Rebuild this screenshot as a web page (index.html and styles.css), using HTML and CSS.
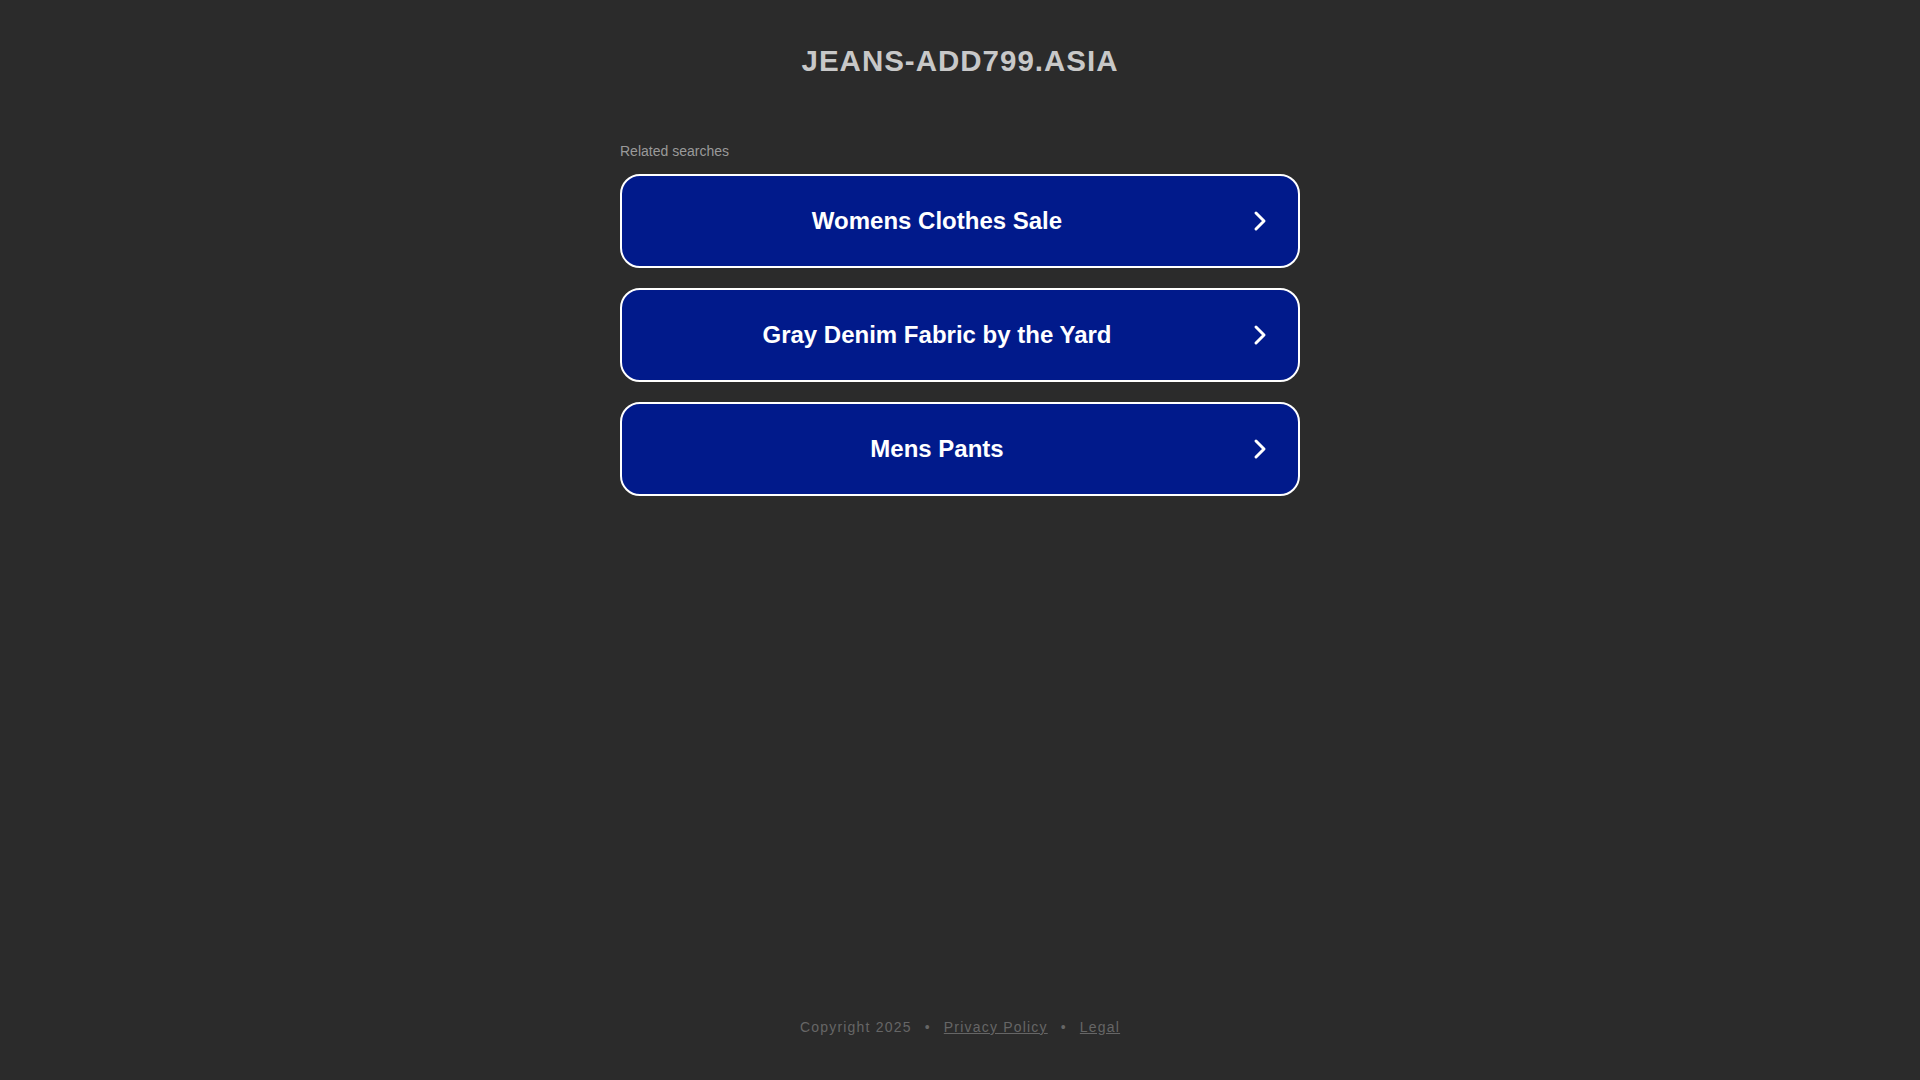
FILE: index.html
```html
<!DOCTYPE html>
<html lang="en">
<head>
    <meta charset="UTF-8">
    <meta name="viewport" content="width=device-width, initial-scale=1.0">
    <link rel="stylesheet" href="styles.css">
    <title>jeans-add799.asia</title>
</head>
<body>
    <div class="page">
        <header class="header">
            <h1 class="domain">JEANS-ADD799.ASIA</h1>
        </header>
        <main class="content">
            <p class="related">Related searches</p>
            <a href="#" class="search-btn">
                <span class="search-text">Womens Clothes Sale</span>
                <svg class="arrow" viewBox="0 0 16 24" width="16" height="24"><path d="M4 4 L12 12 L4 20" fill="none" stroke="#fff" stroke-width="3" stroke-linecap="round" stroke-linejoin="round"/></svg>
            </a>
            <a href="#" class="search-btn">
                <span class="search-text">Gray Denim Fabric by the Yard</span>
                <svg class="arrow" viewBox="0 0 16 24" width="16" height="24"><path d="M4 4 L12 12 L4 20" fill="none" stroke="#fff" stroke-width="3" stroke-linecap="round" stroke-linejoin="round"/></svg>
            </a>
            <a href="#" class="search-btn">
                <span class="search-text">Mens Pants</span>
                <svg class="arrow" viewBox="0 0 16 24" width="16" height="24"><path d="M4 4 L12 12 L4 20" fill="none" stroke="#fff" stroke-width="3" stroke-linecap="round" stroke-linejoin="round"/></svg>
            </a>
        </main>
        <footer class="footer">
            <span>Copyright 2025</span>
            <span class="dot">&bull;</span>
            <a href="#">Privacy Policy</a>
            <span class="dot">&bull;</span>
            <a href="#">Legal</a>
        </footer>
    </div>
</body>
</html>
```

FILE: styles.css
```css
body {
    font-family: "Liberation Sans", Arial, sans-serif;
    background-color: #2b2b2b;
    color: #fff;
    margin: 0;
    padding: 0;
}

.page {
    display: flex;
    flex-direction: column;
    min-height: 100vh;
}

.header {
    text-align: center;
    padding-top: 43px;
}

.domain {
    margin: 0;
    font-size: 29.5px;
    line-height: 36px;
    letter-spacing: 1px;
    color: #c8c8c8;
    font-weight: bold;
}

.content {
    width: 680px;
    margin: 0 auto;
    padding-top: 64px;
    flex: 1;
}

.related {
    margin: 0 0 15px;
    font-size: 14px;
    line-height: 16px;
    color: #9a9a9a;
}

.search-btn {
    display: flex;
    align-items: center;
    height: 90px;
    margin-bottom: 20px;
    padding: 0 30px 0 0;
    background-color: #011a8b;
    border: 2px solid #fff;
    border-radius: 20px;
    color: #fff;
    text-decoration: none;
}

.search-text {
    flex: 1;
    text-align: center;
    font-size: 24px;
    font-weight: bold;
}

.arrow {
    display: block;
}

.footer {
    display: flex;
    justify-content: center;
    gap: 13px;
    padding-bottom: 44px;
    font-size: 14px;
    line-height: 18px;
    letter-spacing: 1.2px;
    color: #666;
}

.footer a {
    color: #666;
}
```
